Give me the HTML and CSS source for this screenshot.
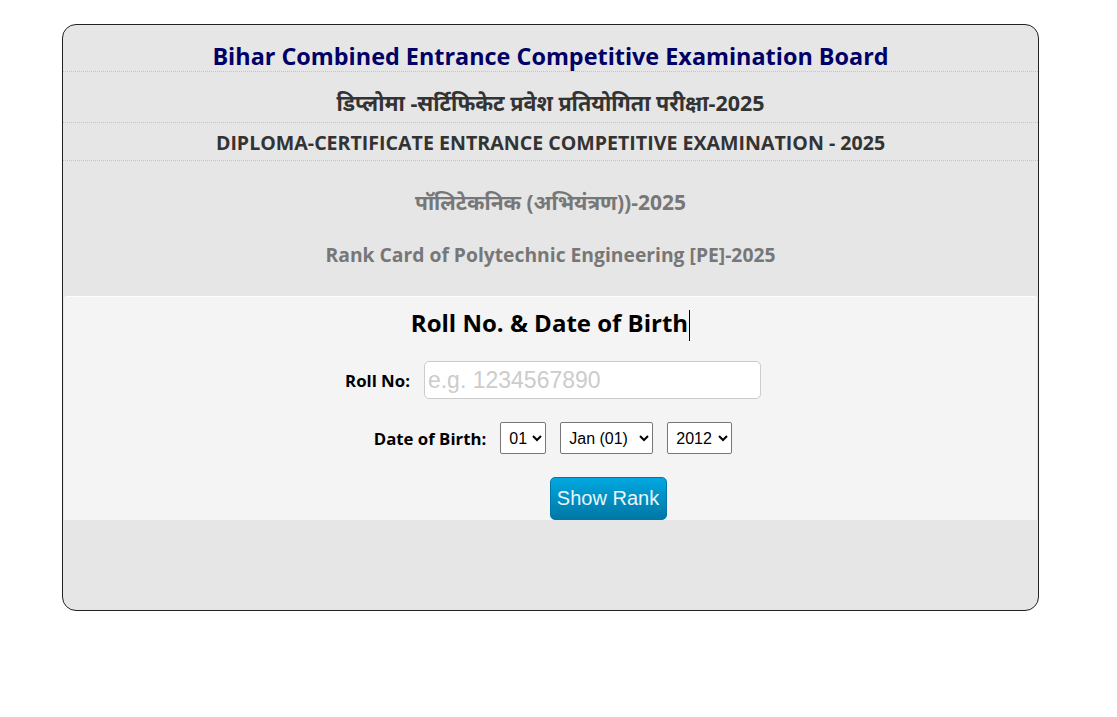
FILE: index.html
```html
<!DOCTYPE html>
<html lang="en">
  <head>
    <meta charset="UTF-8" />
    <meta name="viewport" content="width=device-width, initial-scale=1.0" />
    <title>BCECEB - Rank Card</title>
    <link rel="stylesheet" href="styles.css">
  </head>
  <body>
    <div class="wrapper">
      <div class="head-row board">Bihar Combined Entrance Competitive Examination Board</div>
      <div class="head-row hindi">डिप्लोमा -सर्टिफिकेट प्रवेश प्रतियोगिता परीक्षा-2025</div>
      <div class="head-row exam">DIPLOMA-CERTIFICATE ENTRANCE COMPETITIVE EXAMINATION - 2025</div>
      <div class="head-row course">
        <div class="course-hindi">पॉलिटेकनिक (अभियंत्रण))-2025</div>
        <div class="course-eng">Rank Card of Polytechnic Engineering [PE]-2025</div>
      </div>

      <form class="login-box" onsubmit="return false;">
        <h2 class="login-title">Roll No. &amp; Date of Birth<span class="caret"></span></h2>

        <div class="field-row">
          <label for="rollno">Roll No:</label>
          <input type="text" id="rollno" class="roll-input" placeholder="e.g. 1234567890" />
        </div>

        <div class="field-row">
          <label>Date of Birth:</label>
          <select class="dob-select day">
            <option>01</option>
          </select>
          <select class="dob-select month">
            <option>Jan (01)</option>
          </select>
          <select class="dob-select year">
            <option>2012</option>
          </select>
        </div>

        <div class="btn-row">
          <button type="submit" class="btn-rank">Show Rank</button>
        </div>
      </form>

      <div class="footer-space"></div>
    </div>
  </body>
</html>
```

FILE: styles.css
```css
* {
  box-sizing: border-box;
}

body {
  margin: 0;
  padding: 24px 0 0 62px;
  background: #fff;
  font-family: "Open Sans", "Noto Sans Devanagari", "Noto Sans", sans-serif;
  color: #333;
}

.wrapper {
  width: 977px;
  background: #e6e6e6;
  border: 1px solid #222;
  border-radius: 14px;
  overflow: hidden;
}

.head-row {
  text-align: center;
  font-weight: bold;
  border-bottom: 1px dotted #c4c4c4;
}

.board {
  color: #000066;
  font-size: 23.4px;
  line-height: 24px;
  padding: 19px 0 3px;
}

.hindi {
  font-size: 21.5px;
  line-height: 30px;
  padding: 16px 0 4px;
}

.exam {
  font-size: 19.6px;
  line-height: 24px;
  padding: 8px 0 5px;
}

.course {
  border-bottom: none;
  color: #777;
  height: 135px;
  padding-top: 26px;
}

.course-hindi {
  font-size: 21px;
  line-height: 30px;
}

.course-eng {
  font-size: 19.3px;
  line-height: 24px;
  margin-top: 26px;
}

.login-box {
  margin: 0 1px;
  height: 224px;
  background: #f4f4f4;
  border-top: 1px solid #fdfdfd;
  border-radius: 3px 3px 0 0;
  padding-top: 10px;
}

.login-title {
  margin: 0 0 20px;
  text-align: center;
  font-size: 24px;
  line-height: 32px;
  color: #000;
}

.caret {
  display: inline-block;
  width: 1px;
  height: 31px;
  background: #000;
  vertical-align: middle;
  margin-left: 1px;
}

.field-row {
  display: flex;
  justify-content: center;
  align-items: center;
  gap: 14px;
  padding-left: 5px;
  margin-bottom: 23px;
}

.field-row label {
  font-size: 16.8px;
  font-weight: bold;
  color: #000;
}

.roll-input {
  width: 337px;
  height: 38px;
  border: 1px solid #ccc;
  border-radius: 5px;
  padding: 0 3px;
  font-family: "Liberation Sans", Arial, sans-serif;
  font-size: 23px;
  background: #fff;
}

.roll-input::placeholder {
  color: #ccc;
}

.dob-select {
  height: 32px;
  border: 1px solid #777;
  border-radius: 2px;
  background: #fff;
  font-family: "Liberation Sans", Arial, sans-serif;
  font-size: 16px;
  color: #000;
  padding: 0 2px 0 4px;
}

.dob-select.day {
  width: 46px;
}

.dob-select.month {
  width: 93px;
}

.dob-select.year {
  width: 65px;
}

.btn-row {
  display: flex;
  justify-content: center;
  padding-left: 115px;
}

.btn-rank {
  width: 117px;
  height: 43px;
  border: 1px solid #0077a6;
  border-radius: 5px;
  background: linear-gradient(#00a8e0, #0077a6);
  color: #e8f6fc;
  font-family: "Liberation Sans", Arial, sans-serif;
  font-size: 20px;
  padding: 0;
}

.footer-space {
  height: 90px;
}
```
